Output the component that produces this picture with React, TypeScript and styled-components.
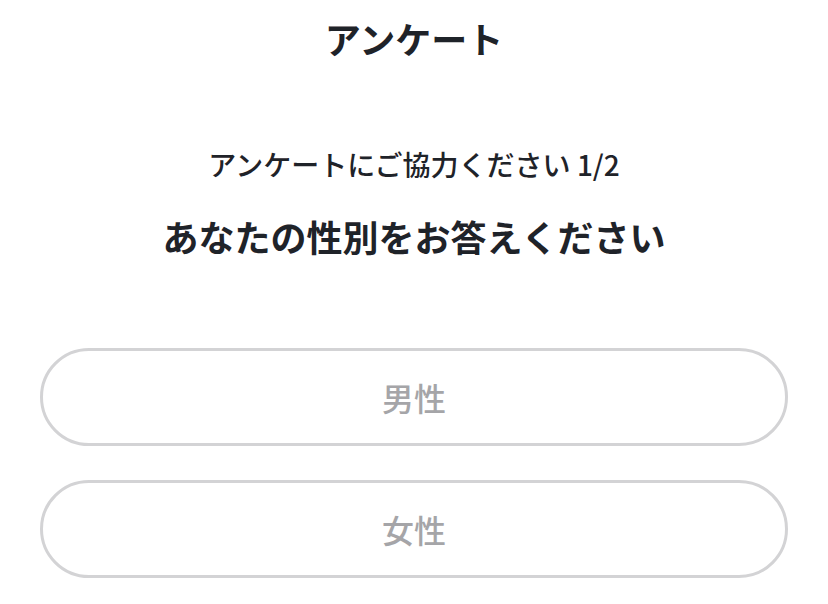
import styled, { createGlobalStyle } from 'styled-components';

const GlobalStyle = createGlobalStyle`
  body {
    margin: 0;
    background: #fff;
    font-family: "Noto Sans CJK JP", "Noto Sans", sans-serif;
    color: #1f2329;
  }
`;

const options = ['男性', '女性'];

const App = () => {
  return (
    <>
      <GlobalStyle />
      <Page>
        <Header>
          <Title>アンケート</Title>
        </Header>
        <Step>アンケートにご協力ください 1/2</Step>
        <Question>あなたの性別をお答えください</Question>
        <Options>
          {options.map((label) => (
            <OptionButton key={label} type="button">
              {label}
            </OptionButton>
          ))}
        </Options>
      </Page>
    </>
  );
};

export default App;

const Page = styled.div`
  display: flex;
  flex-direction: column;
  align-items: stretch;
`;

const Header = styled.header`
  height: 76px;
  display: flex;
  align-items: center;
  justify-content: center;
`;

const Title = styled.h1`
  margin: 0;
  font-size: 36px;
  font-weight: 600;
  line-height: 1;
`;

const Step = styled.p`
  margin: 68px 0 0;
  text-align: center;
  font-size: 28px;
  line-height: 40px;
  font-weight: 500;
`;

const Question = styled.h2`
  margin: 30px 0 0;
  text-align: center;
  font-size: 36px;
  line-height: 44px;
  font-weight: 600;
`;

const Options = styled.div`
  margin: 90px 40px 0;
  display: flex;
  flex-direction: column;
  gap: 34px;
`;

const OptionButton = styled.button`
  height: 98px;
  border: 3px solid #d3d3d5;
  border-radius: 49px;
  background: #fff;
  font-family: inherit;
  font-size: 32px;
  font-weight: 500;
  color: #a5a5a8;
  cursor: pointer;
`;
